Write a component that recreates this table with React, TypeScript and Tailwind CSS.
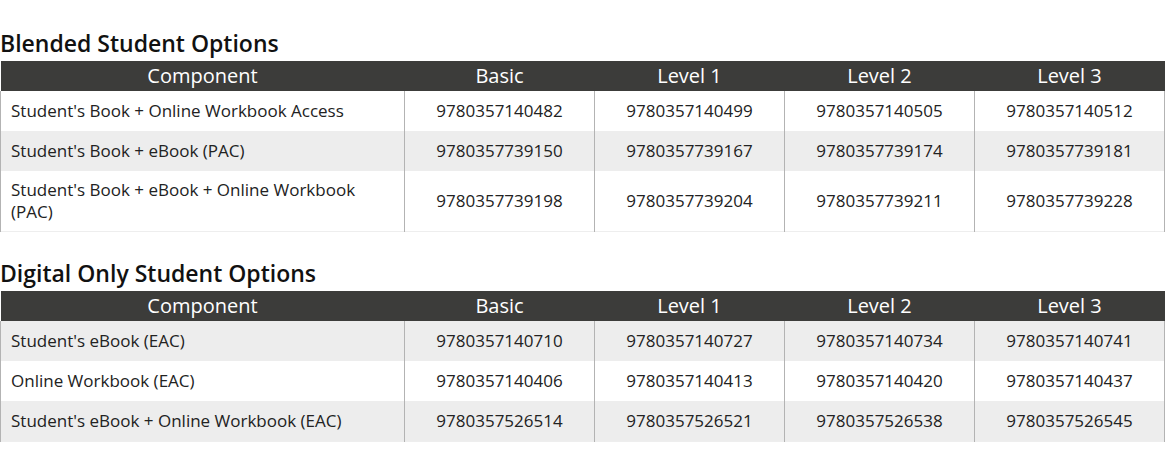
import React from "react";

type Row = { name: string; codes: string[]; shaded: boolean };

const blended: Row[] = [
  { name: "Student's Book + Online Workbook Access", codes: ["9780357140482", "9780357140499", "9780357140505", "9780357140512"], shaded: false },
  { name: "Student's Book + eBook (PAC)", codes: ["9780357739150", "9780357739167", "9780357739174", "9780357739181"], shaded: true },
  { name: "Student's Book + eBook + Online Workbook (PAC)", codes: ["9780357739198", "9780357739204", "9780357739211", "9780357739228"], shaded: false },
];

const digital: Row[] = [
  { name: "Student's eBook (EAC)", codes: ["9780357140710", "9780357140727", "9780357140734", "9780357140741"], shaded: true },
  { name: "Online Workbook (EAC)", codes: ["9780357140406", "9780357140413", "9780357140420", "9780357140437"], shaded: false },
  { name: "Student's eBook + Online Workbook (EAC)", codes: ["9780357526514", "9780357526521", "9780357526538", "9780357526545"], shaded: true },
];

const headers = ["Component", "Basic", "Level 1", "Level 2", "Level 3"];

function Section({ title, rows, first }: { title: string; rows: Row[]; first?: boolean }) {
  return (
    <section className={first ? "pt-[25px]" : "pt-[23px]"}>
      <h2 className="h-[36px] text-[23px] leading-[36px] font-semibold text-[#111]">{title}</h2>
      <table className="w-full table-fixed border-collapse text-[17px] text-[#222]">
        <colgroup>
          <col className="w-[404px]" />
          <col className="w-[190px]" />
          <col className="w-[190px]" />
          <col className="w-[190px]" />
          <col />
        </colgroup>
        <thead>
          <tr className="h-[30px] bg-[#3c3c3a] text-white">
            {headers.map((h) => (
              <th key={h} className="p-0 text-center text-[20px] font-normal leading-[30px]">
                {h}
              </th>
            ))}
          </tr>
        </thead>
        <tbody className="border-b border-[#eeeeee]">
          {rows.map((r) => (
            <tr key={r.name} className={"h-[40px] " + (r.shaded ? "bg-[#ededed]" : "bg-white")}>
              <td className="border-x border-[#b3b3b3] px-[10px] py-[8px] text-left align-middle leading-[22px]">
                {r.name}
              </td>
              {r.codes.map((c) => (
                <td key={c} className="border-x border-[#b3b3b3] px-[10px] py-[8px] text-center align-middle leading-[22px]">
                  {c}
                </td>
              ))}
            </tr>
          ))}
        </tbody>
      </table>
    </section>
  );
}

export default function App() {
  return (
    <div className="w-[1165px] bg-white" style={{ fontFamily: '"Open Sans", "Noto Sans", sans-serif' }}>
      <Section title="Blended Student Options" rows={blended} first />
      <Section title="Digital Only Student Options" rows={digital} />
    </div>
  );
}
